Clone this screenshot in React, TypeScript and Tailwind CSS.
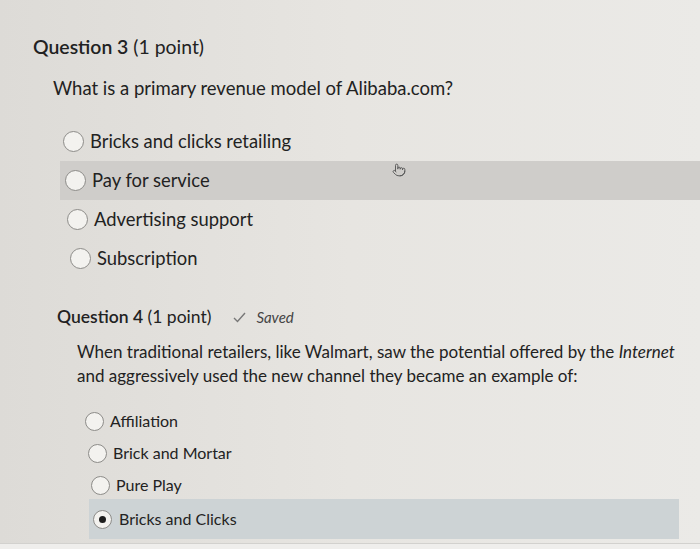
import React from 'react';
import { Pointer } from 'lucide-react';

const Radio = ({ size, checked }: { size: string; checked?: boolean }) => (
  <span
    className={`${size} shrink-0 rounded-full border-[1.5px] border-[#8d8c89] bg-[#f3f2ef] flex items-center justify-center`}
  >
    {checked && <span className="w-[7px] h-[7px] rounded-full bg-[#1e1e1e]" />}
  </span>
);

const q3Options = [
  { label: 'Bricks and clicks retailing', pad: 'pl-[3px]', hover: false },
  { label: 'Pay for service', pad: 'pl-[5px]', hover: true },
  { label: 'Advertising support', pad: 'pl-[7px]', hover: false },
  { label: 'Subscription', pad: 'pl-[10px]', hover: false },
];

const q4Options = [
  { label: 'Affiliation', pad: 'pl-0', checked: false },
  { label: 'Brick and Mortar', pad: 'pl-[3px]', checked: false },
  { label: 'Pure Play', pad: 'pl-[6px]', checked: false },
];

export default function App() {
  return (
    <div
      className="relative w-[700px] h-[549px] overflow-hidden bg-gradient-to-r from-[#dddbd7] via-[#e7e5e1] to-[#ebeae7] text-[#222] flex flex-col"
      style={{ fontFamily: 'Lato, "Open Sans", sans-serif' }}
    >
      <div className="pt-[33px] pl-[33px] text-[19.4px] leading-[28px]">
        <span className="font-semibold">Question 3</span> (1 point)
      </div>
      <div className="mt-[14px] pl-[53px] text-[18.5px] leading-[26px]">
        What is a primary revenue model of Alibaba.com?
      </div>

      <div className="mt-[21px] ml-[60px] flex flex-col text-[18.4px]">
        {q3Options.map((o) => (
          <div
            key={o.label}
            className={`h-[39px] flex items-center gap-[6px] ${o.pad} ${o.hover ? 'bg-[#cfcdca]' : ''}`}
          >
            <Radio size="w-[21px] h-[21px]" />
            <span>{o.label}</span>
          </div>
        ))}
      </div>

      <div className="mt-[27px] pl-[57px] flex items-center text-[17.5px] leading-[24px]">
        <span>
          <span className="font-semibold">Question 4</span> (1 point)
        </span>
        <span className="ml-[22px] flex items-center gap-[10px] text-[15px] italic text-[#444]">
          <svg width="13" height="11" viewBox="0 0 13 11" fill="none">
            <path d="M1 6l3.5 3.5L12 1" stroke="#777" strokeWidth="1.4" />
          </svg>
          Saved
        </span>
      </div>

      <p className="mt-[11px] pl-[77px] w-[690px] text-[17px] leading-[24px]">
        When traditional retailers, like Walmart, saw the potential offered by the <i>Internet</i> and
        aggressively used the new channel they became an example of:
      </p>

      <div className="mt-[17px] ml-[85px] flex flex-col text-[16px]">
        {q4Options.map((o) => (
          <div key={o.label} className={`h-[32px] flex items-center gap-[6px] ${o.pad}`}>
            <Radio size="w-[19px] h-[19px]" />
            <span>{o.label}</span>
          </div>
        ))}
        <div className="h-[40px] w-[590px] -mt-[2px] ml-[4px] pl-[4px] flex items-center gap-[7px] bg-[#cdd3d5]">
          <Radio size="w-[19px] h-[19px]" checked />
          <span>Bricks and Clicks</span>
        </div>
      </div>

      <div className="mt-auto h-[6px] border-t border-[#d2d1ce] bg-[#efeeec]" />

      <Pointer className="absolute left-[392px] top-[163px] w-[14px] h-[14px] text-[#555]" strokeWidth={1.6} />
    </div>
  );
}
